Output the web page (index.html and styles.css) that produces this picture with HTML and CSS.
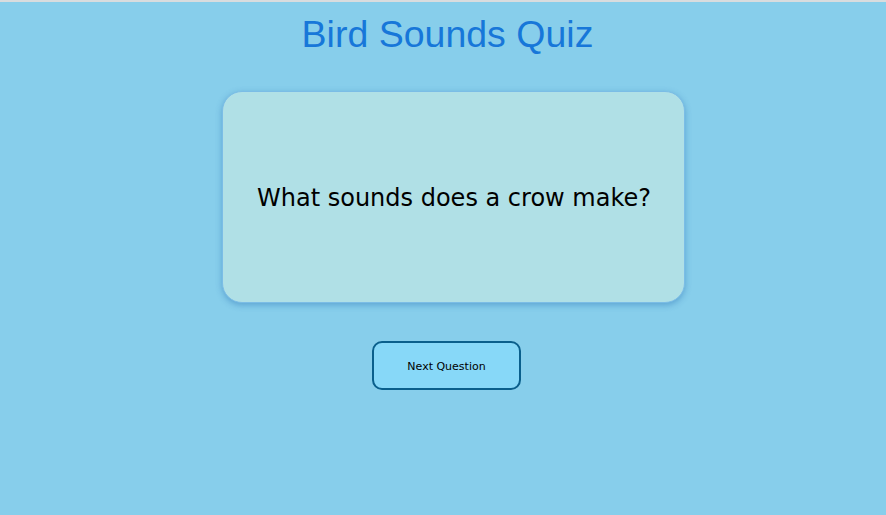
FILE: index.html
```html
<!DOCTYPE html>
<html lang="en">
<head>
<meta charset="utf-8">
<title>Bird Sounds Quiz</title>
<link rel="stylesheet" href="styles.css">
</head>
<body>
<main class="page">
  <h1 class="title">Bird Sounds Quiz</h1>
  <section class="card">
    <p class="question">What sounds does a crow make?</p>
  </section>
  <button class="next-btn" type="button">Next Question</button>
</main>
</body>
</html>
```

FILE: styles.css
```css
html {
  border-top: 2px solid #d9dcde;
  background: #87ceeb;
}
body {
  margin: 0;
  background: #87ceeb;
  font-family: "Liberation Sans", Arial, sans-serif;
}
.page {
  display: flex;
  flex-direction: column;
  align-items: center;
  padding-top: 11px;
}
.title {
  margin: 0 0 0 9px;
  font-size: 37.5px;
  font-weight: normal;
  line-height: 42px;
  color: #1777d9;
}
.card {
  margin-top: 36px;
  margin-left: 21px;
  width: 463px;
  height: 212px;
  box-sizing: border-box;
  background: #b0e0e6;
  border: 1px solid #7bbde6;
  border-radius: 20px;
  box-shadow: 0 2px 6px rgba(40, 110, 180, 0.45);
  display: flex;
  align-items: center;
  justify-content: center;
}
.question {
  margin: 2px 0 0 1px;
  font-family: "DejaVu Sans", sans-serif;
  font-size: 24px;
  color: #000;
}
.next-btn {
  margin-top: 38px;
  margin-left: 7px;
  width: 149px;
  height: 49px;
  padding-top: 2px;
  background: #87d8f8;
  border: 2px solid #0a5f8c;
  border-radius: 10px;
  font-family: "DejaVu Sans", sans-serif;
  font-size: 11px;
  color: #000;
  cursor: pointer;
}
```
